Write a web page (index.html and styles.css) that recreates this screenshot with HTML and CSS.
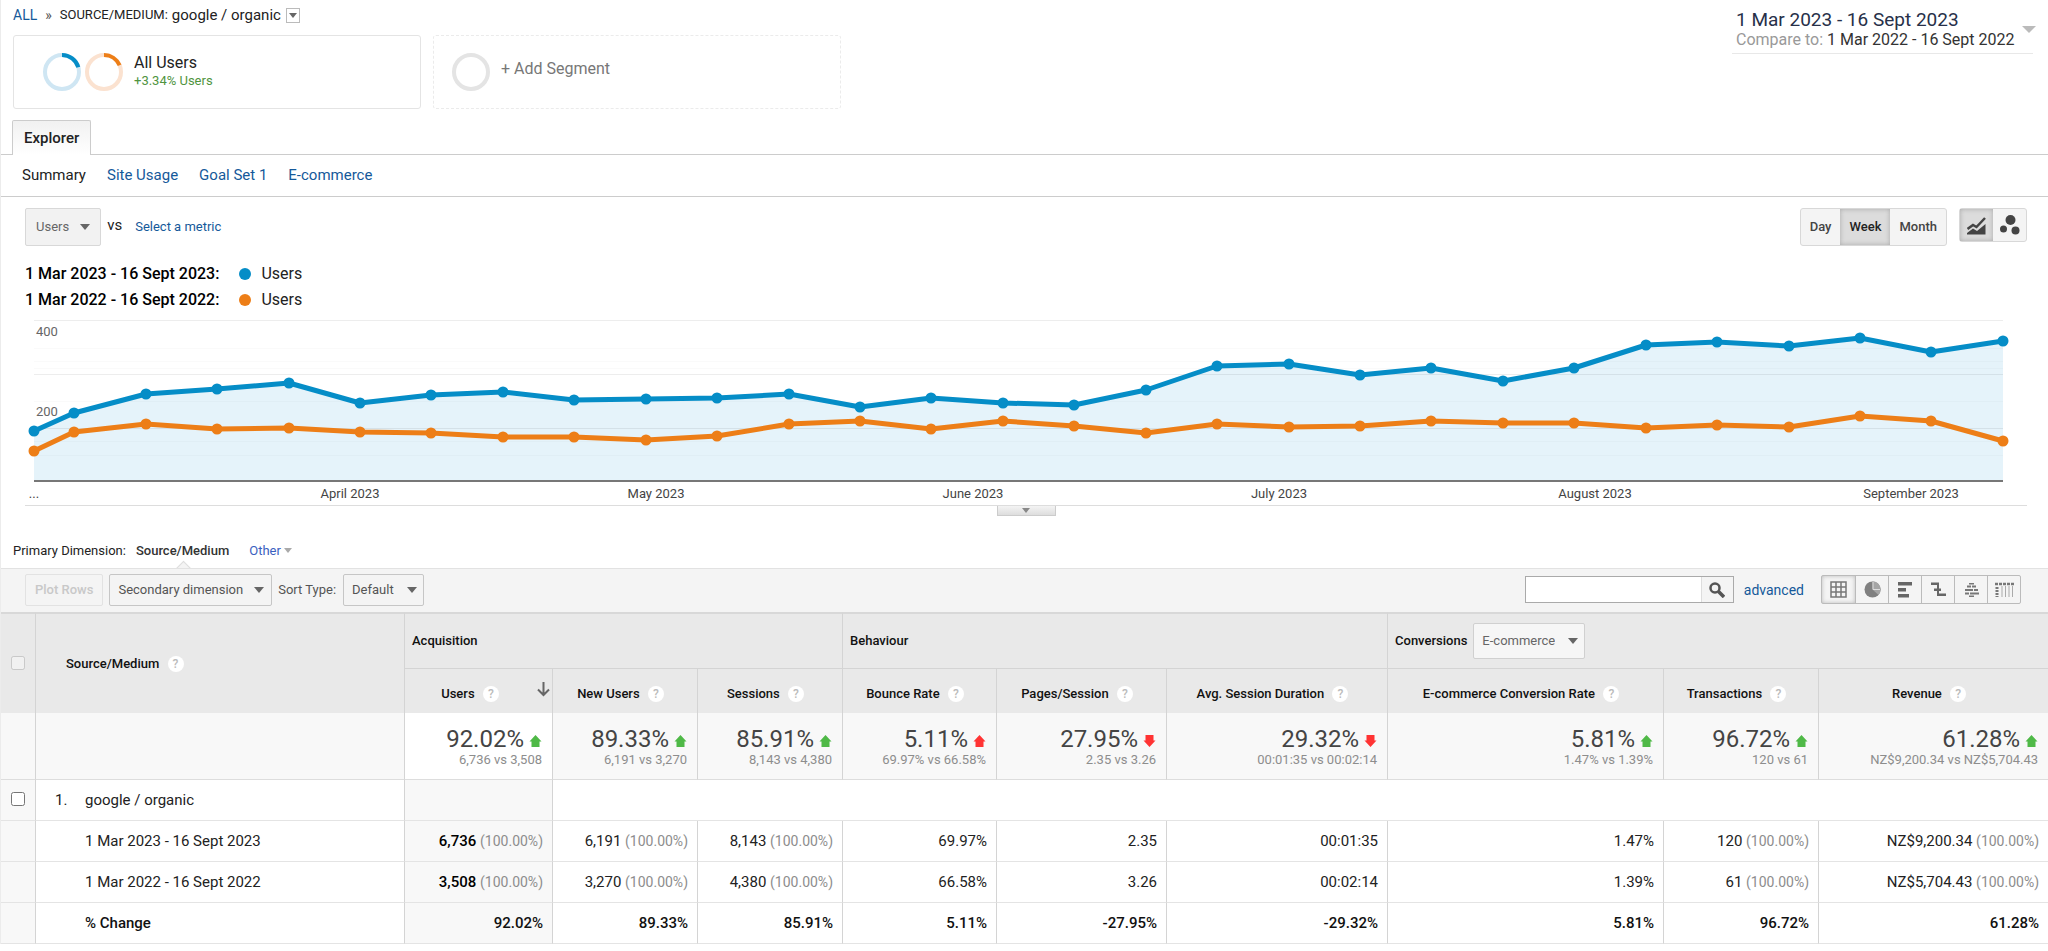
FILE: index.html
```html
<!DOCTYPE html>
<html lang="en">
<head>
<meta charset="utf-8">
<title>Source/Medium report</title>
<link rel="stylesheet" href="styles.css">
</head>
<body>
<svg class="defs" aria-hidden="true">
  <symbol id="up" viewBox="0 0 12 12"><path d="M6 0 12 6.500H10V12H2V6.500H0Z"/></symbol>
  <symbol id="down" viewBox="0 0 12 12"><path d="M6 12 12 5.500H10V0H2V5.500H0Z"/></symbol>
</svg>
<main class="page">
  <header class="top">
    <div class="top-left">
      <nav class="crumbs">
        <a href="#">ALL</a><span class="raquo">»</span>
        <span class="crumb-key">SOURCE/MEDIUM:</span><span class="crumb-value">google / organic</span>
        <button class="crumb-menu" aria-label="Change segment"><i class="caret small"></i></button>
      </nav>
      <div class="segments">
        <div class="segment">
          <svg class="rings" width="82" height="40" viewBox="0 0 82 40" fill="none" stroke-width="4">
            <circle cx="20" cy="20" r="17" stroke="#cfe6f3"/>
            <path d="M20 3A17 17 0 0 1 36.3 15.2" stroke="#058dc7"/>
            <circle cx="62" cy="20" r="17" stroke="#fbe2d0"/>
            <path d="M62 3A17 17 0 0 1 77.6 13.3" stroke="#ed7e17"/>
          </svg>
          <div class="segment-text">
            <span class="segment-name">All Users</span>
            <span class="segment-delta">+3.34% Users</span>
          </div>
        </div>
        <button class="segment add">
          <svg width="40" height="40" viewBox="0 0 40 40" fill="none"><circle cx="20" cy="20" r="17" stroke="#e4e4e4" stroke-width="4"/></svg>
          <span>+ Add Segment</span>
        </button>
      </div>
    </div>
    <button class="dates">
      <span class="dates-text">
        <span class="dates-main">1 Mar 2023 - 16 Sept 2023</span>
        <span class="dates-compare"><em>Compare to:</em> 1 Mar 2022 - 16 Sept 2022</span>
      </span>
      <i class="caret large"></i>
    </button>
  </header>

  <div class="tabs"><button class="tab">Explorer</button></div>
  <nav class="subnav">
    <span>Summary</span><a href="#">Site Usage</a><a href="#">Goal Set 1</a><a href="#">E-commerce</a>
  </nav>

  <section class="explorer">
    <div class="chart-controls">
      <div class="metrics">
        <button class="metric">Users <i class="caret"></i></button>
        <span class="vs">vs</span>
        <a href="#">Select a metric</a>
      </div>
      <div class="chart-buttons">
        <div class="group period">
          <button>Day</button><button class="on">Week</button><button>Month</button>
        </div>
        <div class="group kinds">
          <button class="on" aria-label="Line chart">
            <svg width="19" height="19" viewBox="0 0 19 19"><path fill="#444" d="M0 18.500V17L6 12.500 10 15 18.500 8V18.500Z"/><path fill="none" stroke="#444" stroke-width="2.500" d="M.5 13 6 9 9.500 11 18 2"/></svg>
          </button>
          <button aria-label="Motion chart">
            <svg width="20" height="20" viewBox="0 0 20 20" fill="#444"><circle cx="10.500" cy="5" r="5"/><circle cx="3.500" cy="14" r="3.500"/><circle cx="15.500" cy="15.500" r="4"/></svg>
          </button>
        </div>
      </div>
    </div>
    <div class="legend">
      <b>1 Mar 2023 - 16 Sept 2023:</b><i class="dot blue"></i><span>Users</span>
      <b>1 Mar 2022 - 16 Sept 2022:</b><i class="dot orange"></i><span>Users</span>
    </div>
    <svg class="chart" viewBox="25 315 2002 190" role="img" aria-label="Users by week">
      <polygon fill="#e5f3fa" points="34,481 34,431 74,413 146,394 217,389 289,383 360,403 431,395 503,392 574,400 646,399 717,398 789,394 860,407 931,398 1003,403 1074,405 1146,390 1217,366 1289,364 1360,375 1431,368 1503,381 1574,368 1646,345 1717,342 1789,346 1860,338 1931,352 2003,341 2003,481"/>
      <g stroke="#000">
        <path d="M34 348.500H2003M34 361.500H2003M34 368.500H2003M34 401.500H2003M34 441.500H2003M34 455.500H2003" stroke-opacity=".02"/>
        <path d="M34 320.500H2003M34 374.500H2003M34 428.500H2003" stroke-opacity=".07"/>
      </g>
      <path d="M34 481H2003" stroke="#777" stroke-width="2"/>
      <g class="line blue-line">
        <polyline points="34,431 74,413 146,394 217,389 289,383 360,403 431,395 503,392 574,400 646,399 717,398 789,394 860,407 931,398 1003,403 1074,405 1146,390 1217,366 1289,364 1360,375 1431,368 1503,381 1574,368 1646,345 1717,342 1789,346 1860,338 1931,352 2003,341"/>
        <path class="points" d="M34 431h0M74 413h0M146 394h0M217 389h0M289 383h0M360 403h0M431 395h0M503 392h0M574 400h0M646 399h0M717 398h0M789 394h0M860 407h0M931 398h0M1003 403h0M1074 405h0M1146 390h0M1217 366h0M1289 364h0M1360 375h0M1431 368h0M1503 381h0M1574 368h0M1646 345h0M1717 342h0M1789 346h0M1860 338h0M1931 352h0M2003 341h0"/>
      </g>
      <g class="line orange-line">
        <polyline points="34,451 74,432 146,424 217,429 289,428 360,432 431,433 503,437 574,437 646,440 717,436 789,424 860,421 931,429 1003,421 1074,426 1146,433 1217,424 1289,427 1360,426 1431,421 1503,423 1574,423 1646,428 1717,425 1789,427 1860,416 1931,421 2003,441"/>
        <path class="points" d="M34 451h0M74 432h0M146 424h0M217 429h0M289 428h0M360 432h0M431 433h0M503 437h0M574 437h0M646 440h0M717 436h0M789 424h0M860 421h0M931 429h0M1003 421h0M1074 426h0M1146 433h0M1217 424h0M1289 427h0M1360 426h0M1431 421h0M1503 423h0M1574 423h0M1646 428h0M1717 425h0M1789 427h0M1860 416h0M1931 421h0M2003 441h0"/>
      </g>
      <g class="y-labels"><text x="36" y="336">400</text><text x="36" y="416">200</text></g>
      <g class="x-labels">
        <text x="34" y="498">...</text><text x="350" y="498">April 2023</text><text x="656" y="498">May 2023</text><text x="973" y="498">June 2023</text><text x="1279" y="498">July 2023</text><text x="1595" y="498">August 2023</text><text x="1911" y="498">September 2023</text>
      </g>
    </svg>
    <div class="handle-row"><button class="handle" aria-label="Annotations"><i class="caret small grey"></i></button></div>
  </section>

  <div class="dimension">
    <span>Primary Dimension:</span>
    <b>Source/Medium</b>
    <a href="#">Other <i class="caret small pale"></i></a>
  </div>

  <div class="toolbar">
    <button class="plot" disabled>Plot Rows</button>
    <button class="drop">Secondary dimension <i class="caret"></i></button>
    <label class="sort" for="sort">Sort Type:</label>
    <span class="select"><select id="sort"><option>Default</option></select><i class="caret"></i></span>
    <form class="search">
      <input type="text" aria-label="Search">
      <button type="button" aria-label="Search"><svg width="16" height="16" viewBox="0 0 16 16" fill="none" stroke="#555"><circle cx="6" cy="6" r="4.500" stroke-width="2.500"/><path d="M9.500 9.500 15 15" stroke-width="3.500"/></svg></button>
    </form>
    <a class="advanced" href="#">advanced</a>
    <div class="views">
      <button class="on" aria-label="Table"><svg width="17" height="17" viewBox="0 0 17 17" fill="none" stroke="#777"><path stroke-width="1.500" d="M1 1H16V16H1ZM6 1V16M11 1V16M1 6H16M1 11H16"/></svg></button>
      <button aria-label="Percentage"><svg width="17" height="17" viewBox="0 0 17 17"><circle cx="8.500" cy="8.500" r="8" fill="#808080"/><path d="M8.500 .5A8 8 0 0 1 14.500 14L8.500 8.500Z" fill="#a5a5a5"/><path d="M9 1V8.500H16" stroke="#ddd" fill="none"/></svg></button>
      <button aria-label="Performance"><svg width="15" height="17" viewBox="0 0 15 17" fill="#666"><path d="M0 1H14V4.500H0ZM0 7H8V10.500H0ZM0 13H11V16.500H0Z"/></svg></button>
      <button aria-label="Comparison"><svg width="17" height="17" viewBox="0 0 17 17" fill="#666"><path d="M1 1.500H8V4H1ZM4 7.500H8V10H4ZM8 7.500H11V10H8ZM8 12.500H16V15H8ZM7 1.500H9V15H7Z"/></svg></button>
      <button aria-label="Term cloud"><svg width="17" height="17" viewBox="0 0 17 17" fill="#777"><path d="M6 2H11V3.500H6ZM4 4.500H8V6.500H4ZM9 4.500H13V6.500H9ZM2 8H10V10H2ZM11 8H15V10H11ZM2 11.500H6V13.500H2ZM7 11.500H16V13.500H7ZM6 14.500H11V16H6Z"/></svg></button>
      <button aria-label="Pivot"><svg width="19" height="17" viewBox="0 0 19 17" fill="none" stroke="#777"><path stroke-width="2.500" stroke-dasharray="3 1" d="M0 3H19"/><path stroke-width="3" stroke-dasharray="2 1" d="M2 6V16"/><path d="M7 5V16M10.500 5V16M14 5V16M17.500 5V16" stroke="#aaa"/></svg></button>
    </div>
  </div>

  <table class="report">
    <colgroup><col class="w-check"><col class="w-source"><col class="w-users"><col class="w-new"><col class="w-new"><col class="w-bounce"><col class="w-pages"><col class="w-avg"><col class="w-rate"><col class="w-trans"><col class="w-rev"></colgroup>
    <thead>
      <tr class="groups">
        <th rowspan="2" class="check"><input type="checkbox" disabled aria-label="Select all"></th>
        <th rowspan="2" class="source">Source/Medium <span class="help">?</span></th>
        <th colspan="3">Acquisition</th>
        <th colspan="3">Behaviour</th>
        <th colspan="3"><div class="conversions"><label for="conv">Conversions</label><span class="select white"><select id="conv"><option>E-commerce</option></select><i class="caret"></i></span></div></th>
      </tr>
      <tr class="names">
        <th class="sorted">Users <span class="help">?</span><svg class="sort-arrow" width="13" height="15" viewBox="0 0 13 15" fill="none" stroke="#666" stroke-width="2"><path d="M6.500 0V13M1 7.500 6.500 13 12 7.500"/></svg></th>
        <th>New Users <span class="help">?</span></th>
        <th>Sessions <span class="help">?</span></th>
        <th>Bounce Rate <span class="help">?</span></th>
        <th>Pages/Session <span class="help">?</span></th>
        <th>Avg. Session Duration <span class="help">?</span></th>
        <th>E-commerce Conversion Rate <span class="help">?</span></th>
        <th>Transactions <span class="help">?</span></th>
        <th>Revenue <span class="help">?</span></th>
      </tr>
    </thead>
    <tbody>
      <tr class="summary">
        <td></td><td></td>
        <td class="lead"><strong>92.02%<svg class="good"><use href="#up"/></svg></strong><small>6,736 vs 3,508</small></td>
        <td><strong>89.33%<svg class="good"><use href="#up"/></svg></strong><small>6,191 vs 3,270</small></td>
        <td><strong>85.91%<svg class="good"><use href="#up"/></svg></strong><small>8,143 vs 4,380</small></td>
        <td><strong>5.11%<svg class="bad"><use href="#up"/></svg></strong><small>69.97% vs 66.58%</small></td>
        <td><strong>27.95%<svg class="bad"><use href="#down"/></svg></strong><small>2.35 vs 3.26</small></td>
        <td><strong>29.32%<svg class="bad"><use href="#down"/></svg></strong><small>00:01:35 vs 00:02:14</small></td>
        <td><strong>5.81%<svg class="good"><use href="#up"/></svg></strong><small>1.47% vs 1.39%</small></td>
        <td><strong>96.72%<svg class="good"><use href="#up"/></svg></strong><small>120 vs 61</small></td>
        <td><strong>61.28%<svg class="good"><use href="#up"/></svg></strong><small>NZ$9,200.34 vs NZ$5,704.43</small></td>
      </tr>
      <tr class="row">
        <td class="check"><input type="checkbox" aria-label="Select google / organic"></td>
        <td class="name"><span class="index">1.</span>google / organic</td>
        <td class="lead"></td><td colspan="8"></td>
      </tr>
      <tr class="row">
        <td class="check"></td><td class="name nested">1 Mar 2023 - 16 Sept 2023</td>
        <td class="lead"><b>6,736</b> <small>(100.00%)</small></td><td>6,191 <small>(100.00%)</small></td><td>8,143 <small>(100.00%)</small></td><td>69.97%</td><td>2.35</td><td>00:01:35</td><td>1.47%</td><td>120 <small>(100.00%)</small></td><td>NZ$9,200.34 <small>(100.00%)</small></td>
      </tr>
      <tr class="row">
        <td class="check"></td><td class="name nested">1 Mar 2022 - 16 Sept 2022</td>
        <td class="lead"><b>3,508</b> <small>(100.00%)</small></td><td>3,270 <small>(100.00%)</small></td><td>4,380 <small>(100.00%)</small></td><td>66.58%</td><td>3.26</td><td>00:02:14</td><td>1.39%</td><td>61 <small>(100.00%)</small></td><td>NZ$5,704.43 <small>(100.00%)</small></td>
      </tr>
      <tr class="row change">
        <td class="check"></td><td class="name nested">% Change</td>
        <td class="lead">92.02%</td><td>89.33%</td><td>85.91%</td><td>5.11%</td><td>-27.95%</td><td>-29.32%</td><td>5.81%</td><td>96.72%</td><td>61.28%</td>
      </tr>
    </tbody>
  </table>
</main>
</body>
</html>
```
FILE: styles.css
```css
* { box-sizing: border-box; }
body { margin: 0; background: #fff; color: #222; font: 15px/20px Roboto, "Liberation Sans", sans-serif; }
button, input, select { margin: 0; font: inherit; color: inherit; }
button { padding: 0; border: 0; background: none; }
a { color: #15599a; text-decoration: none; }
b { font-weight: 500; }
.defs { display: none; }
.page { border-left: 1px solid #ececec; }

.caret { display: inline-block; border: 5px solid transparent; border-top: 6px solid #666; border-bottom: 0; }
.caret.small { border-width: 5px 4px 0; }
.caret.large { border-width: 7px 7px 0; border-top-color: #bbb; }
.caret.pale { border-top-color: #aaa; vertical-align: 2px; }
.caret.grey { border-top-color: #888; }

.top { display: flex; justify-content: space-between; height: 120px; padding: 5px 15px 0 12px; }
.crumbs { display: flex; align-items: center; height: 20px; font-size: 14px; }
.raquo { margin: 0 8px; color: #555; }
.crumb-key { font-size: 13px; }
.crumb-value { margin: 0 5px 0 4px; font-size: 15px; }
.crumb-menu { display: flex; align-items: center; justify-content: center; width: 14px; height: 15px; border: 1px solid #bbb; }
.segments { display: flex; gap: 12px; margin-top: 10px; }
.segment { display: flex; align-items: center; width: 408px; height: 74px; padding: 0 28px; border: 1px solid #e4e4e4; border-radius: 3px; }
.segment-text { display: flex; flex-direction: column; margin-left: 10px; }
.segment-name { font-size: 16px; line-height: 18px; }
.segment-delta { color: #4f9440; font-size: 13px; line-height: 18px; }
.segment.add { gap: 10px; padding: 0 17px; border: 1px dashed #ebebeb; color: #777; font-size: 16px; }
.segment.add span { padding-bottom: 6px; }
.dates { display: flex; align-items: flex-start; gap: 8px; width: 301px; height: 49px; padding: 5px 4px 0; border-bottom: 1px solid #e8e8e8; text-align: left; }
.dates .caret { margin-top: 16px; }
.dates-text { display: flex; flex-direction: column; flex: 1; color: #333; white-space: nowrap; }
.dates-main { color: #273049; font-size: 19px; line-height: 20px; }
.dates-compare { font-size: 16px; line-height: 20px; }
.dates-compare em { color: #999; font-style: normal; }

.tabs { display: flex; height: 35px; padding-left: 11px; border-bottom: 1px solid #ccc; }
.tab { height: 35px; padding: 0 11px; border: 1px solid #ccc; border-bottom: 0; border-radius: 2px 2px 0 0; background: linear-gradient(#f1f1f1, #fff); font-weight: 500; }
.subnav { display: flex; gap: 21px; padding: 10px 21px; height: 42px; border-bottom: 1px solid #ccc; }

.explorer { padding: 11px 21px 0 24px; }
.chart-controls { display: flex; justify-content: space-between; }
.metrics { display: flex; align-items: center; font-size: 13px; }
.metric { display: flex; align-items: center; gap: 11px; height: 38px; padding: 0 10px; border: 1px solid #d8d8d8; border-radius: 2px; background: #f2f2f2; color: #666; }
.vs { margin: 0 13px 4px 6px; font-size: 15px; }
.chart-buttons { display: flex; align-items: flex-start; gap: 12px; }
.group { display: flex; border: 1px solid #d8d8d8; border-radius: 3px; background: #f4f4f4; color: #444; }
.group button { display: flex; align-items: center; justify-content: center; }
.group .on { background: #dcdcdc; box-shadow: inset 0 0 5px #aaa; color: #222; }
.period { font-size: 13px; font-weight: 500; }
.period button { height: 36px; padding: 0 9px; }
.kinds button { width: 33px; height: 32px; }
.legend { display: grid; grid-template-columns: max-content 12px 1fr; grid-auto-rows: 26px; align-items: center; margin-top: 15px; font-size: 16px; }
.legend b { color: #000; margin-right: 20px; }
.legend span { margin-left: 10px; }
.dot { width: 12px; height: 12px; border-radius: 50%; }
.dot.blue { background: #058dc7; }
.dot.orange { background: #ed7e17; }
.chart { display: block; width: 100%; margin-top: 2px; overflow: visible; font-size: 13px; }
.chart text { fill: #444; }
.chart .y-labels text { fill: #666; }
.x-labels { text-anchor: middle; }
.line { fill: none; stroke-width: 5; stroke-linejoin: round; }
.points { stroke-width: 11; stroke-linecap: round; }
.blue-line { stroke: #058dc7; }
.orange-line { stroke: #ed7e17; }
.handle-row { display: flex; justify-content: center; height: 36px; border-top: 1px solid #ddd; }
.handle { display: flex; align-items: center; justify-content: center; width: 59px; height: 10px; border: 1px solid #ccc; border-top: 0; background: linear-gradient(#f4f4f4, #ddd); }

.dimension { display: flex; align-items: center; height: 27px; padding: 0 12px 8px; font-size: 13px; }
.dimension b { position: relative; margin: 0 20px 0 10px; color: #333; }
.dimension b::after { content: ""; position: absolute; left: 50%; top: 22px; width: 10px; height: 10px; margin-left: -5px; border: solid #ddd; border-width: 1px 0 0 1px; background: #f4f4f4; transform: rotate(45deg); }
.dimension a { color: #3b5fc0; }

.toolbar { display: flex; align-items: center; height: 44px; padding: 0 27px 2px 24px; border-top: 1px solid #e2e2e2; background: #f4f4f4; color: #555; font-size: 13px; position: relative; }
.plot { height: 32px; padding: 0 9px; border: 1px solid #e2e2e2; border-radius: 2px; color: #c8c8c8; font-weight: 500; }
.drop { display: flex; align-items: center; gap: 11px; height: 32px; margin: 0 6px; padding: 0 7px 0 8px; border: 1px solid #c6c6c6; border-radius: 2px; }
.sort { margin-right: 7px; }
.select { position: relative; display: inline-flex; }
.select select { appearance: none; height: 32px; padding: 0 29px 0 8px; border: 1px solid #c6c6c6; border-radius: 2px; background: transparent; }
.select .caret { position: absolute; right: 7px; top: 50%; margin-top: -3px; pointer-events: none; }
.select.white select { height: 36px; border-color: #d0d0d0; background: #f6f6f6; color: #666; }
.search { display: flex; width: 209px; height: 27px; margin: 0 10px 0 auto; border: 1px solid #aaa; }
.search input { flex: 1; min-width: 0; border: 0; background: #fff; }
.search button { display: flex; align-items: center; justify-content: center; width: 32px; border-left: 1px solid #ddd; }
.advanced { margin-right: 17px; font-size: 14px; }
.views { display: flex; border: 1px solid #bbb; border-radius: 2px; }
.views button { display: flex; align-items: center; justify-content: center; width: 33px; height: 27px; }
.views button + button { border-left: 1px solid #bbb; }
.views .on { box-shadow: inset 0 0 4px #bbb; }

.report { width: 100%; table-layout: fixed; border-spacing: 0; }
.w-check { width: 34px; }
.w-source { width: 369px; }
.w-users { width: 148px; }
.w-new { width: 145px; }
.w-bounce { width: 154px; }
.w-pages { width: 170px; }
.w-avg { width: 221px; }
.w-rate { width: 276px; }
.w-trans { width: 155px; }
.w-rev { width: 230px; }
.report th, .report td { padding: 0 9px; border-left: 1px solid #d4d4d4; text-align: right; white-space: nowrap; }
.report th.check, .report td:first-child { border-left: 0; }
.report th { background: #e9e9e9; color: #111; font-size: 13px; font-weight: 500; text-align: left; }
.report .groups th { height: 56px; border-top: 2px solid #d8d8d8; padding: 0 7px; }
.report .groups .source { padding-left: 30px; }
.report .check { padding: 0; background: #f8f8f8; text-align: center; }
.report th.check { background: #e9e9e9; }
.check input { display: block; width: 14px; height: 14px; margin: 0 auto 2px; }
.conversions { display: flex; align-items: center; gap: 6px; }
.conversions select { font-weight: 400; }
.report .names th { position: relative; height: 45px; padding: 5px 18px 0 9px; border-top: 1px solid #d4d4d4; text-align: center; }
.report .names .sorted { padding-right: 26px; }
.sort-arrow { position: absolute; right: 2px; top: 13px; }
.help { display: inline-block; width: 16px; height: 16px; margin-left: 5px; border-radius: 50%; background: #fff; color: #bbb; font-size: 12px; line-height: 16px; text-align: center; }
.report .summary td { height: 67px; padding: 3px 10px 0; border-bottom: 1px solid #ddd; background: #f8f8f8; }
.report .summary .lead { background: #fff; }
.summary strong { display: block; color: #444; font-size: 24px; font-weight: 400; line-height: 24px; }
.summary svg { width: 13px; height: 12px; margin-left: 5px; }
.good { fill: #4fb947; }
.bad { fill: #f33; }
.report small { color: #8d8d8d; font-size: 14px; font-weight: 400; }
.report .summary small { display: block; font-size: 13px; line-height: 18px; }
.row td { height: 41px; border-bottom: 1px solid #e4e4e4; }
.report .row .lead { background: #f8f8f8; }
.report .row .name { padding-left: 19px; text-align: left; }
.report .row .nested { padding-left: 49px; }
.index { display: inline-block; width: 30px; }
.change td { font-weight: 500; color: #111; }
.row b { color: #000; }
```
